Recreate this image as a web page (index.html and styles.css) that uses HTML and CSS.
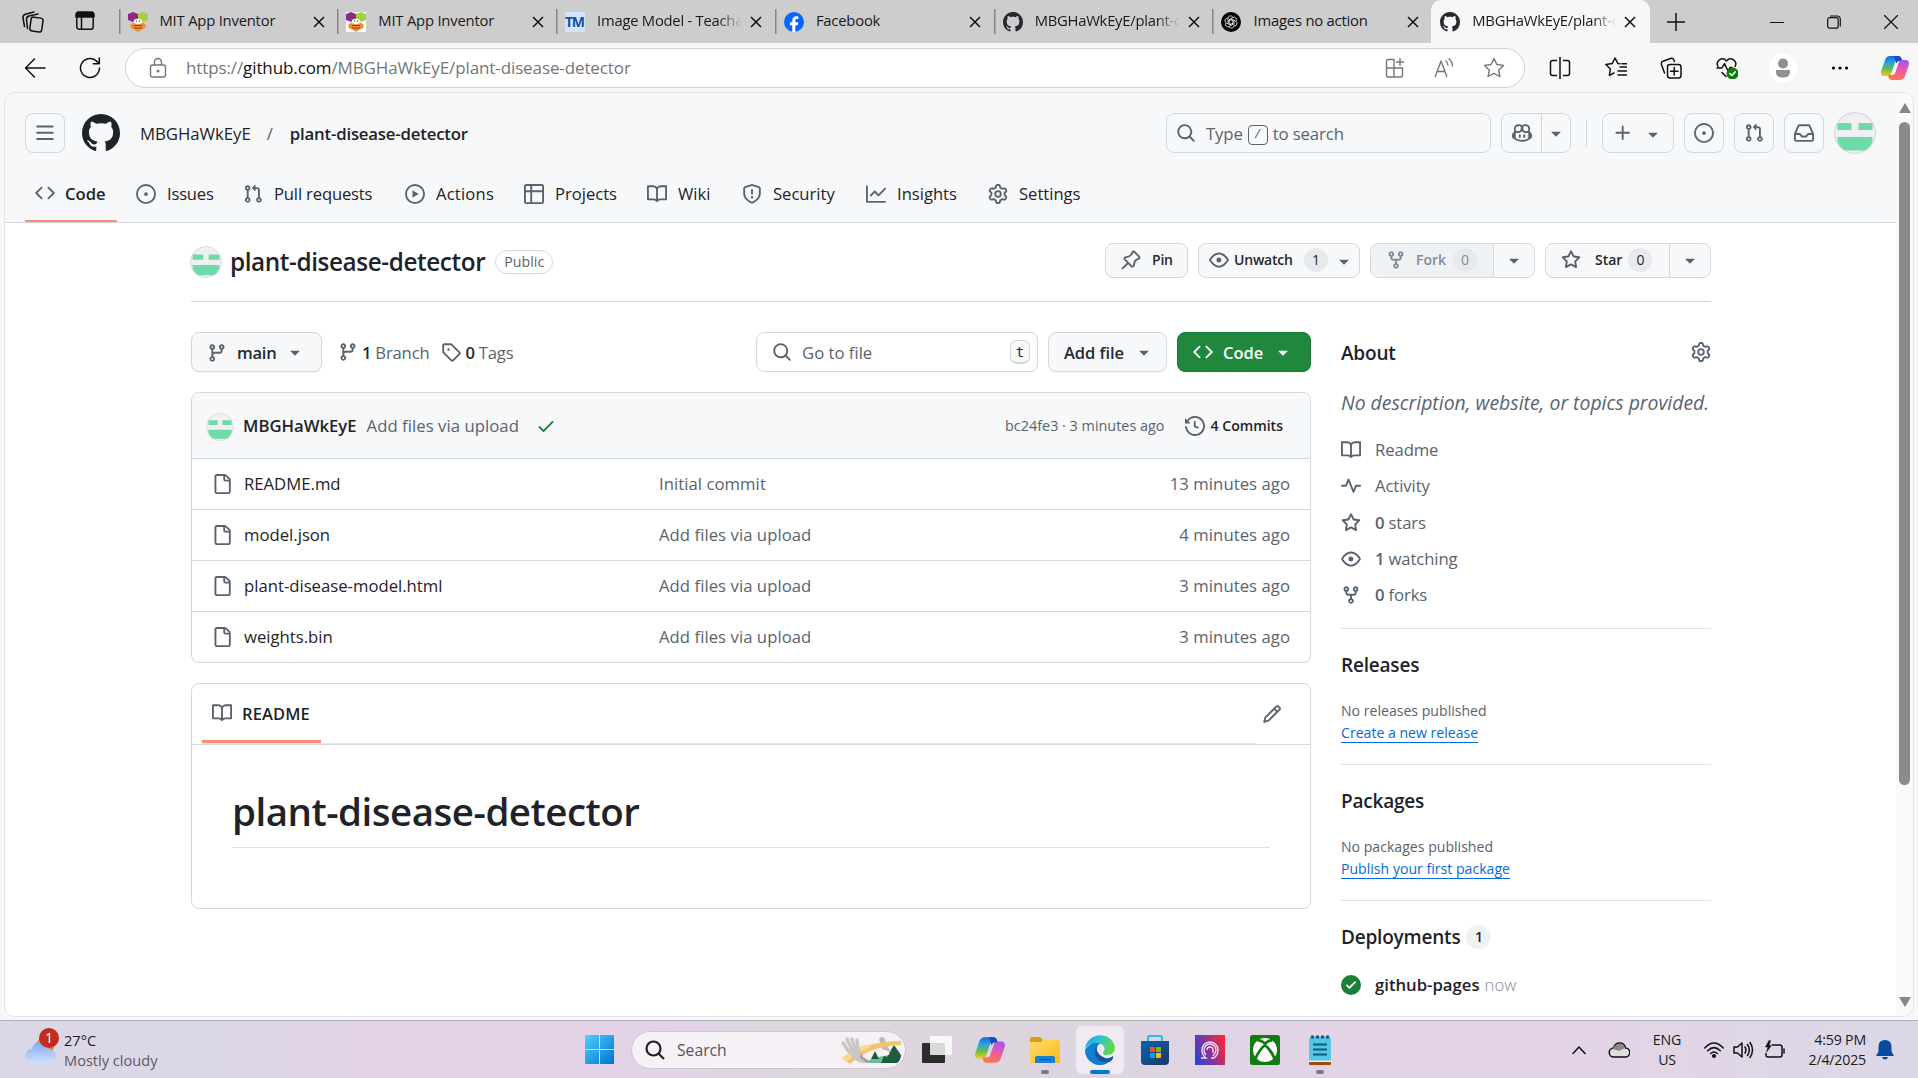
FILE: index.html
```html
<!DOCTYPE html>
<html lang="en">
<head>
<meta charset="utf-8">
<title>MBGHaWkEyE/plant-disease-detector</title>
<link rel="stylesheet" href="styles.css">
</head>
<body>
<svg class="defs" width="0" height="0" aria-hidden="true">
  <symbol id="i-bars" viewBox="0 0 16 16"><path d="M1 2.75A.75.75 0 0 1 1.75 2h12.5a.75.75 0 0 1 0 1.5H1.75A.75.75 0 0 1 1 2.75Zm0 5A.75.75 0 0 1 1.75 7h12.5a.75.75 0 0 1 0 1.5H1.75A.75.75 0 0 1 1 7.75ZM1.75 12h12.5a.75.75 0 0 1 0 1.5H1.75a.75.75 0 0 1 0-1.5Z"/></symbol>
  <symbol id="i-github" viewBox="0 0 16 16"><path d="M8 0c4.42 0 8 3.58 8 8a8.013 8.013 0 0 1-5.45 7.59c-.4.08-.55-.17-.55-.38 0-.27.01-1.13.01-2.2 0-.75-.25-1.23-.54-1.48 1.78-.2 3.65-.88 3.65-3.95 0-.88-.31-1.59-.82-2.15.08-.2.36-1.02-.08-2.12 0 0-.67-.22-2.2.82-.64-.18-1.32-.27-2-.27-.68 0-1.36.09-2 .27-1.53-1.03-2.2-.82-2.2-.82-.44 1.1-.16 1.92-.08 2.12-.51.56-.82 1.28-.82 2.15 0 3.06 1.86 3.75 3.64 3.95-.23.2-.44.55-.51 1.07-.46.21-1.61.55-2.33-.66-.15-.24-.6-.83-1.23-.82-.67.01-.27.38.01.53.34.19.73.9.82 1.13.16.45.68 1.31 2.69.94 0 .67.01 1.3.01 1.49 0 .21-.15.45-.55.38A7.995 7.995 0 0 1 0 8c0-4.42 3.58-8 8-8Z"/></symbol>
  <symbol id="i-code" viewBox="0 0 16 16"><path d="m11.28 3.22 4.25 4.25a.75.75 0 0 1 0 1.06l-4.25 4.25a.749.749 0 0 1-1.275-.326.749.749 0 0 1 .215-.734L13.94 8l-3.72-3.72a.749.749 0 0 1 .326-1.275.749.749 0 0 1 .734.215Zm-6.56 0a.751.751 0 0 1 1.042.018.751.751 0 0 1 .018 1.042L2.06 8l3.72 3.72a.749.749 0 0 1-.326 1.275.749.749 0 0 1-.734-.215L.47 8.53a.75.75 0 0 1 0-1.06Z"/></symbol>
  <symbol id="i-issue" viewBox="0 0 16 16"><path d="M8 9.5a1.5 1.5 0 1 0 0-3 1.5 1.5 0 0 0 0 3Z"/><path d="M8 0a8 8 0 1 1 0 16A8 8 0 0 1 8 0ZM1.5 8a6.5 6.5 0 1 0 13 0 6.5 6.5 0 0 0-13 0Z"/></symbol>
  <symbol id="i-pr" viewBox="0 0 16 16"><path d="M1.5 3.25a2.25 2.25 0 1 1 3 2.122v5.256a2.251 2.251 0 1 1-1.5 0V5.372A2.25 2.25 0 0 1 1.5 3.25Zm5.677-.177L9.573.677A.25.25 0 0 1 10 .854V2.5h1A2.5 2.5 0 0 1 13.5 5v5.628a2.251 2.251 0 1 1-1.5 0V5a1 1 0 0 0-1-1h-1v1.646a.25.25 0 0 1-.427.177L7.177 3.427a.25.25 0 0 1 0-.354ZM3.75 2.5a.75.75 0 1 0 0 1.5.75.75 0 0 0 0-1.5Zm0 9.5a.75.75 0 1 0 0 1.5.75.75 0 0 0 0-1.5Zm8.25.75a.75.75 0 1 0 1.5 0 .75.75 0 0 0-1.5 0Z"/></symbol>
  <symbol id="i-play" viewBox="0 0 16 16"><path d="M8 0a8 8 0 1 1 0 16A8 8 0 0 1 8 0ZM1.5 8a6.5 6.5 0 1 0 13 0 6.5 6.5 0 0 0-13 0Zm4.879-2.773 4.264 2.559a.25.25 0 0 1 0 .428l-4.264 2.559A.25.25 0 0 1 6 10.559V5.442a.25.25 0 0 1 .379-.215Z"/></symbol>
  <symbol id="i-table" viewBox="0 0 16 16"><path d="M0 1.75C0 .784.784 0 1.75 0h12.5C15.216 0 16 .784 16 1.75v12.5A1.75 1.75 0 0 1 14.25 16H1.75A1.75 1.75 0 0 1 0 14.25ZM6.5 6.5v8h7.75a.25.25 0 0 0 .25-.25V6.5Zm8-1.5V1.75a.25.25 0 0 0-.25-.25H6.5V5Zm-13 1.5v7.75c0 .138.112.25.25.25H5v-8ZM5 5V1.5H1.75a.25.25 0 0 0-.25.25V5Z"/></symbol>
  <symbol id="i-book" viewBox="0 0 16 16"><path d="M0 1.75A.75.75 0 0 1 .75 1h4.253c1.227 0 2.317.59 3 1.501A3.743 3.743 0 0 1 11.006 1h4.245a.75.75 0 0 1 .75.75v10.5a.75.75 0 0 1-.75.75h-4.507a2.25 2.25 0 0 0-1.591.659l-.622.621a.75.75 0 0 1-1.06 0l-.622-.621A2.25 2.25 0 0 0 5.258 13H.75a.75.75 0 0 1-.75-.75Zm7.251 10.324.004-5.073-.002-2.253A2.25 2.25 0 0 0 5.003 2.5H1.5v9h3.757a3.75 3.75 0 0 1 1.994.574ZM8.755 4.75l-.004 7.322a3.752 3.752 0 0 1 1.992-.572H14.5v-9h-3.495a2.25 2.25 0 0 0-2.25 2.25Z"/></symbol>
  <symbol id="i-shield" viewBox="0 0 16 16"><path d="M7.467.133a1.748 1.748 0 0 1 1.066 0l5.25 1.68A1.75 1.75 0 0 1 15 3.48V7c0 1.566-.32 3.182-1.303 4.682-.983 1.498-2.585 2.813-5.032 3.855a1.697 1.697 0 0 1-1.33 0c-2.447-1.042-4.049-2.357-5.032-3.855C1.32 10.182 1 8.566 1 7V3.48a1.75 1.75 0 0 1 1.217-1.667Zm.61 1.429a.25.25 0 0 0-.153 0l-5.25 1.68a.25.25 0 0 0-.174.238V7c0 1.358.275 2.666 1.057 3.86.784 1.194 2.121 2.34 4.366 3.297a.196.196 0 0 0 .154 0c2.245-.956 3.582-2.104 4.366-3.298C13.225 9.666 13.5 8.36 13.5 7V3.48a.251.251 0 0 0-.174-.237l-5.25-1.68ZM8.75 4.75v3a.75.75 0 0 1-1.5 0v-3a.75.75 0 0 1 1.5 0ZM9 10.5a1 1 0 1 1-2 0 1 1 0 0 1 2 0Z"/></symbol>
  <symbol id="i-graph" viewBox="0 0 16 16"><path d="M1.5 1.75V13.5h13.75a.75.75 0 0 1 0 1.5H.75a.75.75 0 0 1-.75-.75V1.75a.75.75 0 0 1 1.5 0Zm14.28 2.53-5.25 5.25a.75.75 0 0 1-1.06 0L7 7.06 4.28 9.78a.751.751 0 0 1-1.042-.018.751.751 0 0 1-.018-1.042l3.25-3.25a.75.75 0 0 1 1.06 0L10 7.94l4.72-4.72a.751.751 0 0 1 1.042.018.751.751 0 0 1 .018 1.042Z"/></symbol>
  <symbol id="i-gear" viewBox="0 0 16 16"><path d="M8 0a8.2 8.2 0 0 1 .701.031C9.444.095 9.99.645 10.16 1.29l.288 1.107c.018.066.079.158.212.224.231.114.454.243.668.386.123.082.233.09.299.071l1.103-.303c.644-.176 1.392.021 1.82.63.27.385.506.792.704 1.218.315.675.111 1.422-.364 1.891l-.814.806c-.049.048-.098.147-.088.294.016.257.016.515 0 .772-.01.147.038.246.088.294l.814.806c.475.469.679 1.216.364 1.891a7.977 7.977 0 0 1-.704 1.217c-.428.61-1.176.807-1.82.63l-1.102-.302c-.067-.019-.177-.011-.3.071a5.909 5.909 0 0 1-.668.386c-.133.066-.194.158-.211.224l-.29 1.106c-.168.646-.715 1.196-1.458 1.26a8.006 8.006 0 0 1-1.402 0c-.743-.064-1.289-.614-1.458-1.26l-.289-1.106c-.018-.066-.079-.158-.212-.224a5.738 5.738 0 0 1-.668-.386c-.123-.082-.233-.09-.299-.071l-1.103.303c-.644.176-1.392-.021-1.82-.63a8.12 8.12 0 0 1-.704-1.218c-.315-.675-.111-1.422.363-1.891l.815-.806c.05-.048.098-.147.088-.294a6.214 6.214 0 0 1 0-.772c.01-.147-.038-.246-.088-.294l-.815-.806C.635 6.045.431 5.298.746 4.623a7.92 7.92 0 0 1 .704-1.217c.428-.61 1.176-.807 1.82-.63l1.102.302c.067.019.177.011.3-.071.214-.143.437-.272.668-.386.133-.066.194-.158.211-.224l.29-1.106C6.009.645 6.556.095 7.299.03 7.53.01 7.764 0 8 0Zm-.571 1.525c-.036.003-.108.036-.137.146l-.289 1.105c-.147.561-.549.967-.998 1.189-.173.086-.34.183-.5.29-.417.278-.97.423-1.529.27l-1.103-.303c-.109-.03-.175.016-.195.045-.22.312-.412.644-.573.99-.014.031-.021.11.059.19l.815.806c.411.406.562.957.53 1.456a4.709 4.709 0 0 0 0 .582c.032.499-.119 1.05-.53 1.456l-.815.806c-.081.08-.073.159-.059.19.162.346.353.677.573.989.02.03.085.076.195.046l1.102-.303c.56-.153 1.113-.008 1.53.27.161.107.328.204.501.29.447.222.85.629.997 1.189l.289 1.105c.029.109.101.143.137.146a6.6 6.6 0 0 0 1.142 0c.036-.003.108-.036.137-.146l.289-1.105c.147-.561.549-.967.998-1.189.173-.086.34-.183.5-.29.417-.278.97-.423 1.529-.27l1.103.303c.109.029.175-.016.195-.045.22-.313.411-.644.573-.99.014-.031.021-.11-.059-.19l-.815-.806c-.411-.406-.562-.957-.53-1.456a4.709 4.709 0 0 0 0-.582c-.032-.499.119-1.05.53-1.456l.815-.806c.081-.08.073-.159.059-.19a6.464 6.464 0 0 0-.573-.989c-.02-.03-.085-.076-.195-.046l-1.102.303c-.56.153-1.113.008-1.53-.27a4.44 4.44 0 0 0-.501-.29c-.447-.222-.85-.629-.997-1.189l-.289-1.105c-.029-.11-.101-.143-.137-.146a6.6 6.6 0 0 0-1.142 0ZM11 8a3 3 0 1 1-6 0 3 3 0 0 1 6 0ZM9.5 8a1.5 1.5 0 1 0-3.001.001A1.5 1.5 0 0 0 9.5 8Z"/></symbol>
  <symbol id="i-search" viewBox="0 0 16 16"><path d="M10.68 11.74a6 6 0 0 1-7.922-8.982 6 6 0 0 1 8.982 7.922l3.04 3.04a.749.749 0 0 1-.326 1.275.749.749 0 0 1-.734-.215ZM11.5 7a4.499 4.499 0 1 0-8.997 0A4.499 4.499 0 0 0 11.5 7Z"/></symbol>
  <symbol id="i-copilot" viewBox="0 0 16 16"><path d="M7.998 15.035c-4.562 0-7.873-2.914-7.998-3.749V9.338c.085-.628.677-1.686 1.588-2.065.013-.07.024-.143.036-.218.029-.183.06-.384.126-.612-.201-.508-.254-1.084-.254-1.656 0-.87.128-1.769.693-2.484.579-.733 1.494-1.124 2.724-1.261 1.206-.134 2.262.034 2.944.765.05.053.096.108.139.165.044-.057.094-.112.143-.165.682-.731 1.738-.899 2.944-.765 1.23.137 2.145.528 2.724 1.261.566.715.693 1.614.693 2.484 0 .572-.053 1.148-.254 1.656.066.228.098.429.126.612.012.076.024.148.037.218.924.385 1.522 1.471 1.591 2.095v1.872c0 .766-3.351 3.795-8.002 3.795Zm0-1.485c2.28 0 4.584-1.11 5.002-1.433V7.862l-.023-.116c-.49.21-1.075.291-1.727.291-1.146 0-2.059-.327-2.71-.991A3.222 3.222 0 0 1 8 6.303a3.24 3.24 0 0 1-.544.743c-.65.664-1.563.991-2.71.991-.652 0-1.236-.081-1.727-.291l-.023.116v4.255c.419.323 2.722 1.433 5.002 1.433ZM6.762 2.83c-.193-.206-.637-.413-1.682-.297-1.019.113-1.479.404-1.713.7-.247.312-.369.789-.369 1.554 0 .793.129 1.171.308 1.371.162.181.519.379 1.442.379.853 0 1.339-.235 1.638-.54.315-.322.527-.827.617-1.553.117-.935-.037-1.395-.241-1.614Zm4.155-.297c-1.044-.116-1.488.091-1.681.297-.204.219-.359.679-.242 1.614.091.726.303 1.231.618 1.553.299.305.784.54 1.638.54.922 0 1.28-.198 1.442-.379.179-.2.308-.578.308-1.371 0-.765-.123-1.242-.37-1.554-.233-.296-.693-.587-1.713-.7Z"/><path d="M6.25 9.037a.75.75 0 0 1 .75.75v1.501a.75.75 0 0 1-1.5 0V9.787a.75.75 0 0 1 .75-.75Zm4.25.75v1.501a.75.75 0 0 1-1.5 0V9.787a.75.75 0 0 1 1.5 0Z"/></symbol>
  <symbol id="i-caret" viewBox="0 0 16 16"><path d="m4.427 7.427 3.396 3.396a.25.25 0 0 0 .354 0l3.396-3.396A.25.25 0 0 0 11.396 7H4.604a.25.25 0 0 0-.177.427Z"/></symbol>
  <symbol id="i-plus" viewBox="0 0 16 16"><path d="M7.75 2a.75.75 0 0 1 .75.75V7h4.25a.75.75 0 0 1 0 1.5H8.5v4.25a.75.75 0 0 1-1.5 0V8.5H2.75a.75.75 0 0 1 0-1.5H7V2.75A.75.75 0 0 1 7.75 2Z"/></symbol>
  <symbol id="i-inbox" viewBox="0 0 16 16"><path d="M2.8 2.06A1.75 1.75 0 0 1 4.41 1h7.18c.7 0 1.333.417 1.61 1.06l2.74 6.395c.04.093.06.194.06.295v4.5A1.75 1.75 0 0 1 14.25 15H1.75A1.75 1.75 0 0 1 0 13.25v-4.5c0-.101.02-.202.06-.295Zm1.61.44a.25.25 0 0 0-.23.152L1.887 8H4.75a.75.75 0 0 1 .6.3L6.625 10h2.75l1.275-1.7a.75.75 0 0 1 .6-.3h2.863L11.82 2.652a.25.25 0 0 0-.23-.152Zm10.09 7h-2.875l-1.275 1.7a.75.75 0 0 1-.6.3h-3.5a.75.75 0 0 1-.6-.3L4.375 9.5H1.5v3.75c0 .138.112.25.25.25h12.5a.25.25 0 0 0 .25-.25Z"/></symbol>
  <symbol id="i-pin" viewBox="0 0 16 16"><path d="m11.294.984 3.722 3.722a1.75 1.75 0 0 1-.504 2.826l-1.327.613a3.089 3.089 0 0 0-1.707 2.084l-.584 2.454c-.317 1.332-1.972 1.8-2.94.832L5.75 11.311 1.78 15.28a.749.749 0 1 1-1.06-1.06l3.969-3.97-2.204-2.204c-.968-.968-.5-2.623.832-2.94l2.454-.584a3.08 3.08 0 0 0 2.084-1.707l.613-1.327a1.75 1.75 0 0 1 2.826-.504ZM6.283 9.723l2.732 2.731a.25.25 0 0 0 .42-.119l.584-2.454a4.586 4.586 0 0 1 2.537-3.098l1.328-.613a.25.25 0 0 0 .072-.404l-3.722-3.722a.25.25 0 0 0-.404.072l-.613 1.328a4.584 4.584 0 0 1-3.098 2.537l-2.454.584a.25.25 0 0 0-.119.42l2.731 2.732Z"/></symbol>
  <symbol id="i-eye" viewBox="0 0 16 16"><path d="M8 2c1.981 0 3.671.992 4.933 2.078 1.27 1.091 2.187 2.345 2.637 3.023a1.62 1.62 0 0 1 0 1.798c-.45.678-1.367 1.932-2.637 3.023C11.67 13.008 9.981 14 8 14c-1.981 0-3.671-.992-4.933-2.078C1.797 10.83.88 9.576.43 8.898a1.62 1.62 0 0 1 0-1.798c.45-.677 1.367-1.931 2.637-3.022C4.33 2.992 6.019 2 8 2ZM1.679 7.932a.12.12 0 0 0 0 .136c.411.622 1.241 1.75 2.366 2.717C5.176 11.758 6.527 12.5 8 12.5c1.473 0 2.825-.742 3.955-1.715 1.124-.967 1.954-2.096 2.366-2.717a.12.12 0 0 0 0-.136c-.412-.621-1.242-1.75-2.366-2.717C10.824 4.242 9.473 3.5 8 3.5c-1.473 0-2.825.742-3.955 1.715-1.124.967-1.954 2.096-2.366 2.717ZM8 10a2 2 0 1 1-.001-3.999A2 2 0 0 1 8 10Z"/></symbol>
  <symbol id="i-fork" viewBox="0 0 16 16"><path d="M5 5.372v.878c0 .414.336.75.75.75h4.5a.75.75 0 0 0 .75-.75v-.878a2.25 2.25 0 1 1 1.5 0v.878a2.25 2.25 0 0 1-2.25 2.25h-1.5v2.128a2.251 2.251 0 1 1-1.5 0V8.5h-1.5A2.25 2.25 0 0 1 3.5 6.25v-.878a2.25 2.25 0 1 1 1.5 0ZM5 3.25a.75.75 0 1 0-1.5 0 .75.75 0 0 0 1.5 0Zm6.75.75a.75.75 0 1 0 0-1.5.75.75 0 0 0 0 1.5Zm-3 8.75a.75.75 0 1 0-1.5 0 .75.75 0 0 0 1.5 0Z"/></symbol>
  <symbol id="i-star" viewBox="0 0 16 16"><path d="M8 .25a.75.75 0 0 1 .673.418l1.882 3.815 4.21.612a.75.75 0 0 1 .416 1.279l-3.046 2.97.719 4.192a.751.751 0 0 1-1.088.791L8 12.347l-3.766 1.98a.75.75 0 0 1-1.088-.79l.72-4.194L.818 6.374a.75.75 0 0 1 .416-1.28l4.21-.611L7.327.668A.75.75 0 0 1 8 .25Zm0 2.445L6.615 5.5a.75.75 0 0 1-.564.41l-3.097.45 2.24 2.184a.75.75 0 0 1 .216.664l-.528 3.084 2.769-1.456a.75.75 0 0 1 .698 0l2.77 1.456-.53-3.084a.75.75 0 0 1 .216-.664l2.24-2.183-3.096-.45a.75.75 0 0 1-.564-.41L8 2.694Z"/></symbol>
  <symbol id="i-branch" viewBox="0 0 16 16"><path d="M9.5 3.25a2.25 2.25 0 1 1 3 2.122V6A2.5 2.5 0 0 1 10 8.5H6a1 1 0 0 0-1 1v1.128a2.251 2.251 0 1 1-1.5 0V5.372a2.25 2.25 0 1 1 1.5 0v1.836A2.493 2.493 0 0 1 6 7h4a1 1 0 0 0 1-1v-.628A2.25 2.25 0 0 1 9.5 3.25Zm-6 0a.75.75 0 1 0 1.5 0 .75.75 0 0 0-1.5 0Zm8.25-.75a.75.75 0 1 0 0 1.5.75.75 0 0 0 0-1.5ZM4.25 12a.75.75 0 1 0 0 1.5.75.75 0 0 0 0-1.5Z"/></symbol>
  <symbol id="i-tag" viewBox="0 0 16 16"><path d="M1 7.775V2.75C1 1.784 1.784 1 2.75 1h5.025c.464 0 .91.184 1.238.513l6.25 6.25a1.75 1.75 0 0 1 0 2.474l-5.026 5.026a1.75 1.75 0 0 1-2.474 0l-6.25-6.25A1.752 1.752 0 0 1 1 7.775Zm1.5 0c0 .066.026.13.073.177l6.25 6.25a.25.25 0 0 0 .354 0l5.025-5.025a.25.25 0 0 0 0-.354l-6.25-6.25a.25.25 0 0 0-.177-.073H2.75a.25.25 0 0 0-.25.25ZM6 5a1 1 0 1 1 0 2 1 1 0 0 1 0-2Z"/></symbol>
  <symbol id="i-check" viewBox="0 0 16 16"><path d="M13.78 4.22a.75.75 0 0 1 0 1.06l-7.25 7.25a.75.75 0 0 1-1.06 0L2.22 9.28a.751.751 0 0 1 .018-1.042.751.751 0 0 1 1.042-.018L6 10.94l6.72-6.72a.75.75 0 0 1 1.06 0Z"/></symbol>
  <symbol id="i-history" viewBox="0 0 16 16"><path d="m.427 1.927 1.215 1.215a8.002 8.002 0 1 1-1.6 5.685.75.75 0 1 1 1.493-.154 6.5 6.5 0 1 0 1.18-4.458l1.358 1.358A.25.25 0 0 1 3.896 6H.25A.25.25 0 0 1 0 5.75V2.104a.25.25 0 0 1 .427-.177ZM7.75 4a.75.75 0 0 1 .75.75v2.992l2.028.812a.75.75 0 0 1-.557 1.392l-2.5-1A.751.751 0 0 1 7 8.25v-3.5A.75.75 0 0 1 7.75 4Z"/></symbol>
  <symbol id="i-file" viewBox="0 0 16 16"><path d="M2 1.75C2 .784 2.784 0 3.75 0h6.586c.464 0 .909.184 1.237.513l2.914 2.914c.329.328.513.773.513 1.237v9.586A1.75 1.75 0 0 1 13.25 16h-9.5A1.75 1.75 0 0 1 2 14.25Zm1.75-.25a.25.25 0 0 0-.25.25v12.5c0 .138.112.25.25.25h9.5a.25.25 0 0 0 .25-.25V6h-2.75A1.75 1.75 0 0 1 9 4.25V1.5Zm6.75.062V4.25c0 .138.112.25.25.25h2.688l-.011-.013-2.914-2.914-.013-.011Z"/></symbol>
  <symbol id="i-pencil" viewBox="0 0 16 16"><path d="M11.013 1.427a1.75 1.75 0 0 1 2.474 0l1.086 1.086a1.75 1.75 0 0 1 0 2.474l-8.61 8.61c-.21.21-.47.364-.756.445l-3.251.93a.75.75 0 0 1-.927-.928l.929-3.25c.081-.286.235-.547.445-.758l8.61-8.61Zm.176 4.823L9.75 4.81l-6.286 6.287a.253.253 0 0 0-.064.108l-.558 1.953 1.953-.558a.253.253 0 0 0 .108-.064Zm1.238-3.763a.25.25 0 0 0-.354 0L10.811 3.75l1.439 1.44 1.263-1.263a.25.25 0 0 0 0-.354Z"/></symbol>
  <symbol id="i-pulse" viewBox="0 0 16 16"><path d="M6 2c.306 0 .582.187.696.471L10 10.731l1.304-3.26A.751.751 0 0 1 12 7h3.25a.75.75 0 0 1 0 1.5h-2.742l-1.812 4.528a.751.751 0 0 1-1.392 0L6 4.77 4.696 8.03A.75.75 0 0 1 4 8.5H.75a.75.75 0 0 1 0-1.5h2.742l1.812-4.529A.751.751 0 0 1 6 2Z"/></symbol>
  <symbol id="i-checkfill" viewBox="0 0 16 16"><path d="M8 16A8 8 0 1 1 8 0a8 8 0 0 1 0 16Zm3.78-9.72a.751.751 0 0 0-.018-1.042.751.751 0 0 0-1.042-.018L6.75 9.19 5.28 7.72a.751.751 0 0 0-1.042.018.751.751 0 0 0-.018 1.042l2 2a.75.75 0 0 0 1.06 0Z"/></symbol>
  <symbol id="i-x" viewBox="0 0 12 12"><path d="M1 1l10 10M11 1L1 11" fill="none" stroke="#111" stroke-width="1.5"/></symbol>
  <symbol id="i-avatar" viewBox="0 0 40 40"><circle cx="20" cy="20" r="19.5" fill="#f0f0f0"/><path d="M3.3 10.5h13.3v6.6H3.3zM23.4 10.5h13.3v6.6H23.4zM3.3 23.8h33.4v4.5Q34 34 31 36.700H9Q6 34 3.300 28.300z" fill="#6edaa8"/><circle cx="20" cy="20" r="19.400" fill="none" stroke="#d4d8dc" stroke-width="1.100"/></symbol>
  <symbol id="i-bee" viewBox="0 0 20 20"><path d="M5 0l5 2v6L5 10 0 8V2z" fill="#8e2a86"/><path d="M15 0l5 2v6l-5 2-5-2V2z" fill="#a5cf3f"/><path d="M3 12l4-2h6l4 2 1 2-2 3H4l-2-3z" fill="#f18b34"/><path d="M5.500 11h9v6L10 20l-4.500-3z" fill="#f18b34"/><ellipse cx="10" cy="9.500" rx="4.300" ry="2.800" fill="#fff"/><circle cx="8.500" cy="9" r=".7" fill="#444"/><circle cx="11.500" cy="9" r=".7" fill="#444"/><path d="M6 13.500h8M6 16h8" stroke="#7a4a2d" stroke-width="1.200"/></symbol>
  <symbol id="i-cop" viewBox="0 0 28 28"><path d="M9 2h8c2 0 3 1 3.500 3l.5 2h-4c-2 0-3 1-3.500 3l-3 9c-.5 2-1.500 3-3.500 3H3C0 22-.5 19 .5 16L4 6c.8-2.500 2.500-4 5-4z" fill="url(#cg1)"/><path d="M19 26h-8c-2 0-3-1-3.500-3L7 21h4c2 0 3-1 3.500-3l3-9c.5-2 1.500-3 3.500-3h4c3 0 3.500 3 2.500 6l-3.500 10c-.8 2.500-2.500 4-5 4z" fill="url(#cg2)"/><path d="M13 2h4c2 0 3 1 3.500 3l.5 1.500c-3 0-4.500.5-5.500 3z" fill="#1749c8"/></symbol>
  <linearGradient id="cg1" x1="0" y1="0" x2="0" y2="1"><stop offset="0" stop-color="#1668dc"/><stop offset=".35" stop-color="#25a8d8"/><stop offset=".65" stop-color="#63bd55"/><stop offset="1" stop-color="#fdc810"/></linearGradient>
  <linearGradient id="cg2" x1=".6" y1="0" x2=".3" y2="1"><stop offset="0" stop-color="#a855f2"/><stop offset=".5" stop-color="#f05a9c"/><stop offset="1" stop-color="#fb7a48"/></linearGradient>
  <linearGradient id="win" x1="0" y1="0" x2="1" y2="1"><stop offset="0" stop-color="#4fd2fc"/><stop offset="1" stop-color="#0070d2"/></linearGradient>
  <linearGradient id="cloud" x1="0" y1="0" x2="0" y2="1"><stop offset="0" stop-color="#7fa9f2"/><stop offset="1" stop-color="#cfe0fb"/></linearGradient>
  <linearGradient id="folder" x1="0" y1="0" x2="1" y2="1"><stop offset="0" stop-color="#ffd970"/><stop offset="1" stop-color="#fbbb13"/></linearGradient>
  <linearGradient id="edgetop" x1="0" y1="0" x2="1" y2=".3"><stop offset="0" stop-color="#1d9de0"/><stop offset=".5" stop-color="#2fc2d5"/><stop offset="1" stop-color="#61d84a"/></linearGradient>
  <linearGradient id="store" x1="0" y1="0" x2="1" y2="1"><stop offset="0" stop-color="#0565b5"/><stop offset="1" stop-color="#22355f"/></linearGradient>
  <linearGradient id="knot" x1="0" y1=".7" x2="1" y2=".3"><stop offset="0" stop-color="#3340d8"/><stop offset=".5" stop-color="#8c3494"/><stop offset="1" stop-color="#f92738"/></linearGradient>
</svg>

<header class="tabstrip">
  <div class="strip-icons">
    <svg width="24" height="24" viewBox="0 0 24 24" class="line"><rect x="9.500" y="7.500" width="12" height="14" rx="2.500" transform="rotate(8 15 14)"/><path d="M6.500 18.500L5.500 9.500Q5.500 6.500 8 6L17 4M3.500 16.500L2 8Q1.800 5 4.500 4.300L13 2"/></svg>
    <svg width="20" height="20" viewBox="0 0 20 20" class="line"><rect x="1.800" y="1.800" width="16.400" height="16.400" rx="2.500"/><path d="M1 6V3.500A2.500 2.500 0 0 1 3.500 1h13A2.500 2.500 0 0 1 19 3.500V6z" fill="#111"/><path d="M6.500 6v12"/></svg>
  </div>
  <div class="tab"><svg class="fav"><use href="#i-bee"/></svg><span class="tab-title">MIT App Inventor</span><svg class="x"><use href="#i-x"/></svg></div>
  <div class="tab"><svg class="fav white"><use href="#i-bee"/></svg><span class="tab-title">MIT App Inventor</span><svg class="x"><use href="#i-x"/></svg></div>
  <div class="tab"><span class="fav tm">TM</span><span class="tab-title fade">Image Model - Teacha</span><svg class="x"><use href="#i-x"/></svg></div>
  <div class="tab"><svg class="fav" viewBox="0 0 20 20"><circle cx="10" cy="10" r="10" fill="#0866ff"/><path d="M8.300 20v-6.700H6v-3h2.300V8.700c0-3 1.500-4.500 4.300-4.500.6 0 1.300.1 1.700.2V7H13c-1.300 0-1.700.6-1.700 1.700v1.600h2.900l-.5 3h-2.400V20z" fill="#fff"/></svg><span class="tab-title">Facebook</span><svg class="x"><use href="#i-x"/></svg></div>
  <div class="tab"><svg class="fav dark"><use href="#i-github"/></svg><span class="tab-title fade">MBGHaWkEyE/plant-d</span><svg class="x"><use href="#i-x"/></svg></div>
  <div class="tab"><svg class="fav" viewBox="0 0 20 20"><circle cx="10" cy="10" r="10" fill="#000"/><g fill="none" stroke="#fff" stroke-width=".8"><path id="petal" d="M10 12.300L7 10.500V6.200a2.500 2.500 0 0 1 4.700-1.100"/><use href="#petal" transform="rotate(60 10 10)"/><use href="#petal" transform="rotate(120 10 10)"/><use href="#petal" transform="rotate(180 10 10)"/><use href="#petal" transform="rotate(240 10 10)"/><use href="#petal" transform="rotate(300 10 10)"/></g></svg><span class="tab-title">Images no action</span><svg class="x"><use href="#i-x"/></svg></div>
  <div class="tab active"><svg class="fav dark"><use href="#i-github"/></svg><span class="tab-title fade">MBGHaWkEyE/plant-d</span><svg class="x"><use href="#i-x"/></svg></div>
  <svg class="newtab line" width="18" height="18" viewBox="0 0 18 18"><path d="M9 0v18M0 9h18"/></svg>
  <div class="winctl">
    <svg width="14" height="14" viewBox="0 0 14 14" class="line thin"><path d="M.5 7.500h13"/></svg>
    <svg width="14" height="14" viewBox="0 0 14 14" class="line thin"><rect x=".7" y="2.700" width="10.500" height="10.500" rx="2"/><path d="M3.500 1h6.500q3.300 0 3.300 3.300V11"/></svg>
    <svg width="14" height="14" viewBox="0 0 14 14" class="line thin"><path d="M.5.5l13 13M13.500.5l-13 13"/></svg>
  </div>
</header>

<div class="toolbar">
  <svg class="back line" width="22" height="22" viewBox="0 0 22 22"><path d="M21 11H2M10.500 2L1.500 11l9 9"/></svg>
  <svg class="reload line" width="22" height="22" viewBox="0 0 22 22"><path d="M20.500 11A9.500 9.500 0 1 1 17 3.600L20 6.500M20.300 1v5.700h-6"/></svg>
  <div class="address">
    <svg class="lock" width="18" height="22" viewBox="0 0 18 22"><rect x="1.500" y="8" width="15" height="12" rx="2"/><path d="M5.500 8V5a3.500 3.500 0 0 1 7 0v3"/><circle cx="9" cy="14" r=".8"/></svg>
    <span class="url">https://<b>github.com</b>/MBGHaWkEyE/plant-disease-detector</span>
    <span class="addr-icons">
      <svg width="20" height="20" viewBox="0 0 20 20"><path d="M9 10H1.500V3q0-1.500 1.500-1.500h6zM1.500 10v7.500q0 1.500 1.500 1.500h6v-9zM9 10h8.500v7.500q0 1.500-1.500 1.500H9zM15 0v8M11 4h8"/></svg>
      <svg width="20" height="20" viewBox="0 0 20 20"><path d="M1 19L7 3l6 16M3.200 13.500h7.600M11.500 2.500q2.500 2 2.500 5M14.500.5q4 3 4 8"/></svg>
      <svg width="22" height="22" viewBox="0 0 22 22"><path d="M11 1.500l2.900 6 6.600.9-4.800 4.600 1.200 6.500-5.900-3.100-5.900 3.100 1.200-6.500L1.500 8.400l6.600-.9z"/></svg>
    </span>
  </div>
  <div class="tool-icons">
    <svg class="line" viewBox="0 0 22 22"><path d="M11 0v22M7.500 3.500h-4a2 2 0 0 0-2 2v11a2 2 0 0 0 2 2h4M14.500 3.500h4a2 2 0 0 1 2 2v11a2 2 0 0 1-2 2h-4"/></svg>
    <svg class="line" viewBox="0 0 22 22"><path d="M15 6.700l-2.200-.3L10 1 7.200 6.600l-6.400.9 4.600 4.500-1 6.400 4.600-2.400M15 10h6.500M13 14h8.500M13 18h8.500M17 6.800h4.500"/></svg>
    <svg class="line" viewBox="0 0 22 22"><rect x="7.500" y="7.500" width="13.500" height="13.500" rx="2.500"/><path d="M14.200 10.500v7.500M10.500 14.200H18M4.500 16L1.500 7.500q-.6-2.500 1.500-3.200L10.500 1.500q2.500-.8 3.300 1.500l.5 1.500"/></svg>
    <svg class="line" viewBox="0 0 22 22"><path d="M10 19.500L6 15.500M2 9.500C-1 4 6-1 10.500 4 15-1 22 4 19 9.500M1 11h5l2.500-4.500L12 14l2-3.500h2"/><circle cx="16.500" cy="16.500" r="6" fill="#107c10" stroke="none"/><path d="M13.800 16.500l2 2 3.500-3.800" stroke="#fff"/></svg>
    <svg class="profile user" viewBox="0 0 28 28"><circle cx="14" cy="14" r="14" fill="#fff"/><circle cx="14" cy="9.500" r="5" fill="#8f8f8f"/><path d="M7 16h14v2q0 5.500-7 5.500T7 18z" fill="#8f8f8f"/></svg>
    <svg viewBox="0 0 22 22"><circle cx="4.500" cy="11" r="1.600"/><circle cx="11" cy="11" r="1.600"/><circle cx="17.500" cy="11" r="1.600"/></svg>
    <svg class="profile" viewBox="0 0 28 28"><use href="#i-cop"/></svg>
  </div>
</div>

<div class="viewport">
<main class="page">
  <div class="gh-header">
    <div class="gh-top">
      <span class="sq"><svg class="oct"><use href="#i-bars"/></svg></span>
      <svg class="gh-logo"><use href="#i-github"/></svg>
      <nav class="crumbs"><span class="owner">MBGHaWkEyE</span><span class="slash">/</span><b>plant-disease-detector</b></nav>
      <div class="gh-search"><svg class="oct"><use href="#i-search"/></svg><span class="type">Type</span><kbd>/</kbd><span>to search</span></div>
      <div class="split"><span class="cop"><svg class="oct"><use href="#i-copilot"/></svg></span><span class="drop"><svg class="oct"><use href="#i-caret"/></svg></span></div>
      <i class="vr"></i>
      <div class="sq create"><svg class="oct"><use href="#i-plus"/></svg><svg class="oct"><use href="#i-caret"/></svg></div>
      <span class="sq"><svg class="oct"><use href="#i-issue"/></svg></span>
      <span class="sq"><svg class="oct"><use href="#i-pr"/></svg></span>
      <span class="sq"><svg class="oct"><use href="#i-inbox"/></svg></span>
      <svg class="me"><use href="#i-avatar"/></svg>
    </div>
    <nav class="gh-nav">
      <a class="on"><svg class="oct"><use href="#i-code"/></svg><b>Code</b></a>
      <a><svg class="oct"><use href="#i-issue"/></svg><span>Issues</span></a>
      <a><svg class="oct"><use href="#i-pr"/></svg><span>Pull requests</span></a>
      <a><svg class="oct"><use href="#i-play"/></svg><span>Actions</span></a>
      <a><svg class="oct"><use href="#i-table"/></svg><span>Projects</span></a>
      <a><svg class="oct"><use href="#i-book"/></svg><span>Wiki</span></a>
      <a><svg class="oct"><use href="#i-shield"/></svg><span>Security</span></a>
      <a><svg class="oct"><use href="#i-graph"/></svg><span>Insights</span></a>
      <a><svg class="oct"><use href="#i-gear"/></svg><span>Settings</span></a>
    </nav>
  </div>

  <div class="repo">
    <div class="repo-head">
      <svg class="repo-avatar"><use href="#i-avatar"/></svg>
      <h2>plant-disease-detector</h2>
      <span class="public">Public</span>
      <div class="actions">
        <span class="btn pin"><svg class="oct"><use href="#i-pin"/></svg>Pin</span>
        <span class="btn watch"><svg class="oct"><use href="#i-eye"/></svg>Unwatch<em>1</em><svg class="oct car"><use href="#i-caret"/></svg></span>
        <span class="btn pair fork"><span class="main-part"><svg class="oct"><use href="#i-fork"/></svg>Fork<em>0</em></span><span class="drop"><svg class="oct"><use href="#i-caret"/></svg></span></span>
        <span class="btn pair star"><span class="main-part"><svg class="oct"><use href="#i-star"/></svg>Star<em>0</em></span><span class="drop"><svg class="oct"><use href="#i-caret"/></svg></span></span>
      </div>
    </div>

    <div class="cols">
      <div class="col-main">
        <div class="bar">
          <span class="mbtn branch"><svg class="oct"><use href="#i-branch"/></svg><b>main</b><svg class="oct"><use href="#i-caret"/></svg></span>
          <span class="stat br"><svg class="oct"><use href="#i-branch"/></svg><b>1</b>Branch</span>
          <span class="stat tg"><svg class="oct"><use href="#i-tag"/></svg><b>0</b>Tags</span>
          <span class="goto"><svg class="oct"><use href="#i-search"/></svg><span>Go to file</span><kbd>t</kbd></span>
          <span class="mbtn add"><b>Add file</b><svg class="oct"><use href="#i-caret"/></svg></span>
          <span class="mbtn green"><svg class="oct"><use href="#i-code"/></svg><b>Code</b><svg class="oct"><use href="#i-caret"/></svg></span>
        </div>

        <section class="files">
          <div class="commit">
            <svg class="ava"><use href="#i-avatar"/></svg><b>MBGHaWkEyE</b><span class="msg">Add files via upload</span><svg class="oct ok"><use href="#i-check"/></svg>
            <span class="sha">bc24fe3 · 3 minutes ago</span><svg class="oct"><use href="#i-history"/></svg><span class="count">4 Commits</span>
          </div>
          <div class="row"><svg class="oct"><use href="#i-file"/></svg><span class="name">README.md</span><span class="what">Initial commit</span><span class="when">13 minutes ago</span></div>
          <div class="row"><svg class="oct"><use href="#i-file"/></svg><span class="name">model.json</span><span class="what">Add files via upload</span><span class="when">4 minutes ago</span></div>
          <div class="row"><svg class="oct"><use href="#i-file"/></svg><span class="name">plant-disease-model.html</span><span class="what">Add files via upload</span><span class="when">3 minutes ago</span></div>
          <div class="row"><svg class="oct"><use href="#i-file"/></svg><span class="name">weights.bin</span><span class="what">Add files via upload</span><span class="when">3 minutes ago</span></div>
        </section>

        <section class="readme">
          <div class="readme-head"><div class="rtabs"><span class="rtab"><svg class="oct"><use href="#i-book"/></svg><b>README</b></span></div><svg class="oct"><use href="#i-pencil"/></svg></div>
          <div class="readme-body"><h1>plant-disease-detector</h1></div>
        </section>
      </div>

      <aside>
        <section class="about">
          <h3>About<svg class="oct"><use href="#i-gear"/></svg></h3>
          <p class="desc">No description, website, or topics provided.</p>
          <ul>
            <li><svg class="oct"><use href="#i-book"/></svg>Readme</li>
            <li><svg class="oct"><use href="#i-pulse"/></svg>Activity</li>
            <li><svg class="oct"><use href="#i-star"/></svg><b>0</b> stars</li>
            <li><svg class="oct"><use href="#i-eye"/></svg><b>1</b> watching</li>
            <li><svg class="oct"><use href="#i-fork"/></svg><b>0</b> forks</li>
          </ul>
        </section>
        <section class="block"><h3>Releases</h3><p>No releases published</p><p><a>Create a new release</a></p></section>
        <section class="block"><h3>Packages</h3><p>No packages published</p><p><a>Publish your first package</a></p></section>
        <section class="block"><h3>Deployments<em>1</em></h3><div class="deploy"><svg class="oct"><use href="#i-checkfill"/></svg><b>github-pages</b><span>now</span></div></section>
      </aside>
    </div>
  </div>
</main>
<div class="scroll"><i class="up"></i><i class="thumb"></i><i class="down"></i></div>
</div>

<footer class="taskbar">
  <div class="weather">
    <svg width="36" height="40" viewBox="0 0 36 40"><circle cx="20" cy="19" r="9" fill="#f58220"/><path d="M7 36a7 7 0 0 1 0-14c1-5 4-7 8-7 5 0 8 3 9 7h0a7 7 0 0 1 0 14z" fill="url(#cloud)"/><circle cx="24" cy="11" r="10" fill="#c42b1c"/><text x="24" y="16" text-anchor="middle" fill="#fff" font-size="14">1</text></svg>
    <div class="wtext"><span>27°C</span><span class="cond">Mostly cloudy</span></div>
  </div>
  <div class="apps">
    <svg class="start" width="29" height="29" viewBox="0 0 29 29" fill="url(#win)"><path d="M1 0h13v14H0V1q0-1 1-1zM15 0h13q1 0 1 1v13H15zM0 15h14v14H1q-1 0-1-1zM15 15h14v13q0 1-1 1H15z"/></svg>
    <div class="tsearch"><svg width="20" height="20" viewBox="0 0 20 20" fill="none" stroke="#222" stroke-width="2.200"><circle cx="8.500" cy="8.500" r="7"/><path d="M13.500 13.500l5.500 5.500"/></svg><span>Search</span>
      <svg width="62" height="28" viewBox="0 0 62 28"><path d="M22 27q16-8 38-9-1 5-6 9z" fill="#6fbf94"/><path d="M35 15l-4 8h8zM54 9l-5 8h1l-3 4-3-1-3 7h16q4-3 4-8z" fill="#1f5c3e"/><path d="M39 3q3-4 6 0l1 5 5 8-9-3z" fill="#c2b9b7"/><path d="M2 22Q25 5 61 5v4Q32 9 10 28z" fill="#f0c76d"/><path d="M2 22Q14 12 28 8l2 3Q18 16 6 26z" fill="#f7d996"/><g fill="none" stroke="#cdc5c3" stroke-width="3.400" stroke-linecap="round"><path d="M3 7l6 9M7 3l5 11M12 3l3 10M17 4l1 9"/></g><path d="M8 14q4-3 9-3l4 4 1 6 9 6H21q-10-4-13-13z" fill="#cdc5c3"/><path d="M21 16l2 5 8 5-4 1-7-5z" fill="#a89f9f"/></svg></div>
    <svg class="tview" width="30" height="29" viewBox="0 0 30 29"><rect x="0" y="8" width="23" height="20" rx="1" fill="#2c2c2c"/><rect x="8" y="1" width="22" height="19" rx="1" fill="#fff" opacity=".82"/></svg>
    <span class="app"><svg viewBox="0 0 28 28"><use href="#i-cop"/></svg></span>
    <span class="app run"><svg viewBox="0 0 30 30"><path d="M0 4q0-2 2-2h8l3 3-2 3H0z" fill="#dc9a0c"/><path d="M0 7h11l2-2h15q2 0 2 2v21H0z" fill="url(#folder)"/><path d="M5 28v-5q0-2 2-2h16q2 0 2 2v5z" fill="#1481d4"/><path d="M9 24.500h12" stroke="#074a86"/></svg></span>
    <span class="app cur"><svg viewBox="0 0 30 30"><path d="M0 15A15 15 0 0 0 24 27q5-3 4-6-4 3-8 2-6-2-8-7-1-7 5-8Q7 4 0 15z" fill="#0e7fd2"/><path d="M10 16q0 12 14 11 4-2 4-5.500-4 3-8 1.500-6-2-8-7-1-4 1-6-3 2-3 6z" fill="#13569e"/><path d="M0 14C2-3 26-5 30 12q0 8-8 8-6 0-3-4 2-4-3-7Q6 5 0 14z" fill="url(#edgetop)"/></svg></span>
    <span class="app"><svg viewBox="0 0 30 30"><path d="M8 7V3q0-2 2-2h10q2 0 2 2v4" fill="none" stroke="#30b4ec" stroke-width="2"/><path d="M1 6h28v20q0 4-4 4H5q-4 0-4-4z" fill="url(#store)"/><path fill="#f25022" d="M10 12h5v5h-5z"/><path fill="#7fba00" d="M16 12h5v5h-5z"/><path fill="#00a4ef" d="M10 18h5v5h-5z"/><path fill="#ffb900" d="M16 18h5v5h-5z"/></svg></span>
    <span class="app"><svg viewBox="0 0 30 30"><path fill="url(#knot)" d="M0 0h30v30H0z"/><path d="M6 23h5q-4-3-4-8a8 8 0 0 1 16 0q0 5-4 8h-3M11 20q-2-2-2-5a6 6 0 0 1 12 0q0 3-3 6M12 15a3 3 0 0 1 6 0v3" fill="none" stroke="#f3dcef" stroke-width="1.400"/></svg></span>
    <span class="app"><svg viewBox="0 0 30 30"><rect width="30" height="30" rx="2.500" fill="#107c10"/><circle cx="15" cy="15" r="12" fill="#fff"/><path d="M5 24.500Q9 15 15 10q6 5 10 14.500M7.500 5.500q3.500-.5 7.500 3 4-3.500 7.500-3" fill="none" stroke="#107c10" stroke-width="2.800"/></svg></span>
    <span class="app run"><svg viewBox="0 0 30 30"><rect x="4" y="2" width="22" height="25" rx="2" fill="#55c6e4"/><path d="M4 26h22v3q0 1-1 1H5q-1 0-1-1z" fill="#a14a0a"/><path d="M4 25.500h22v1.500H4z" fill="#eee"/><path d="M8 9.500h14M8 14.500h14M8 19.500h14" stroke="#0b5c80" stroke-width="2"/><g fill="#0b5c80"><circle cx="7.500" cy="2" r="1.800"/><circle cx="12.500" cy="2" r="1.800"/><circle cx="17.500" cy="2" r="1.800"/><circle cx="22.500" cy="2" r="1.800"/></g></svg></span>
  </div>
  <div class="tray">
    <svg class="line chev" width="14" height="10" viewBox="0 0 14 10"><path d="M1 8.500l6-6.500 6 6.500"/></svg>
    <svg class="line cl" width="22" height="18" viewBox="0 0 22 18"><path d="M6 16a4.500 4.500 0 0 1-.5-9C7 3 9 2 11.500 2c3.500 0 5.500 2 6 5a4.500 4.500 0 0 1-.5 9z" fill="#dedede"/><path d="M5 8c2-6 10-8 12-1l-6 3z" fill="#888" stroke="none"/></svg>
    <div class="lang"><span>ENG</span><span>US</span></div>
    <svg class="line" width="20" height="18" viewBox="0 0 20 18"><path d="M.7 7Q10-3 19.300 7M3.700 9.700q6.300-6.200 12.600 0M6.700 12.500q3.300-3 6.600 0"/><circle cx="10" cy="15" r="1.300" fill="#111"/></svg>
    <svg class="line sp" width="21" height="18" viewBox="0 0 21 18"><path d="M1 6h3.500L9 2v14l-4.500-4H1zM12 6q1.800 3 0 6M14.500 3.500q3.500 5.500 0 11M17 1.500q5 7.500 0 15"/></svg>
    <svg class="line" width="21" height="20" viewBox="0 0 21 20"><path d="M8.500 5H16q2 0 2 2v8q0 2-2 2H4q-2 0-2-2v-1.500M20 9v4"/><path d="M5 .5L1.500 7H4l-1.500 5L7.500 5.500H5L6.500 1z" fill="#111" stroke-width=".5"/></svg>
    <div class="clock"><span>4:59 PM</span><span>2/4/2025</span></div>
    <svg class="bell" width="18" height="20" viewBox="0 0 18 20" fill="#0a4a9c"><path d="M9 0q6.500 0 6.500 7v4.500L18 16H0l2.500-4.500V7Q2.500 0 9 0zM6 17h6q-.5 2.500-3 2.500T6 17z"/></svg>
  </div>
</footer>
</body>
</html>
```
FILE: styles.css
```css
* { box-sizing: border-box; }
body {
  margin: 0; width: 1918px; height: 1078px; overflow: hidden;
  display: flex; flex-direction: column;
  background: #f7f7f7; color: #1f2328;
  font: 16.700px/20px "Open Sans", "Noto Sans", sans-serif;
}
b { font-weight: 600; }
em { font-style: normal; }
h1, h2, h3, p, ul { margin: 0; padding: 0; }
svg { display: block; flex: none; }
span, b { white-space: nowrap; }
.defs { position: absolute; }
.line { fill: none; stroke: #111; stroke-width: 1.500; stroke-linejoin: round; stroke-linecap: round; }
.thin { stroke-width: 1.200; }
.oct { width: 20px; height: 20px; fill: #59636e; }

/* tab strip */
.tabstrip { flex: none; height: 43px; background: #cdcdcd; display: flex; align-items: center; }
.strip-icons { width: 118.500px; padding-left: 21px; display: flex; align-items: center; gap: 30px; }
.strip-icons svg:last-child { margin-top: -2px; }
.tab { width: 218.800px; height: 43px; padding: 0 12.500px 0 9px; display: flex; align-items: center; font-size: 14.800px; color: #1a1a1a; background: linear-gradient(#858585, #858585) 0 9px / 1.500px 25px no-repeat; }
.fav { width: 20px; height: 20px; margin-right: 12px; flex: none; }
.white { background: #fff; }
.dark { fill: #24292f; }
.tm { background: #d2e3fc; color: #174ea6; font: 700 14px/20px "Open Sans", sans-serif; letter-spacing: -1.500px; }
.tab-title { flex: 1; min-width: 0; margin-right: 8px; margin-top: -4px; letter-spacing: -.2px; }
.fade { -webkit-mask-image: linear-gradient(90deg, #000 84%, transparent 100%); mask-image: linear-gradient(90deg, #000 84%, transparent 100%); letter-spacing: -.25px; }
.x { width: 12px; height: 12px; }
.active { background: #f7f7f7; border-radius: 10px 10px 0 0; padding-right: 14px; }
.newtab { margin-left: 17px; }
.winctl { margin-left: auto; margin-right: 20px; display: flex; gap: 43px; }

/* toolbar */
.toolbar { flex: none; height: 49px; display: flex; align-items: center; padding-left: 24px; }
.reload { margin-left: 33px; }
.address { margin-left: 24px; width: 1400px; height: 40px; border: 1.500px solid #d0d0d0; border-radius: 20px; background: #fff; display: flex; align-items: center; padding: 0 19px 0 23px; }
.lock, .addr-icons svg { fill: none; stroke: #767676; stroke-width: 1.400; stroke-linejoin: round; }
.url { margin-left: 19px; font-size: 17px; color: #767676; letter-spacing: -.11px; }
.url b { color: #111; font-weight: 400; }
.addr-icons { margin-left: auto; display: flex; align-items: center; gap: 29px; }
.tool-icons { margin-left: 24px; display: flex; align-items: center; gap: 33.500px; }
.tool-icons svg { width: 22px; height: 22px; }
.tool-icons .profile { width: 28px; height: 28px; margin: 0 -3px; }
.tool-icons .user { margin: 0 -2px; }

/* viewport */
.viewport { margin: 0 4px 0 4px; height: 925px; flex: none; border: 1px solid #e2e4e6; border-radius: 11px; background: #fff; display: flex; overflow: hidden; }
.page { width: 1891px; flex: none; }
.scroll { flex: 1; background: #fafafa; display: flex; flex-direction: column; align-items: center; padding: 10px 0 9px; }
.up, .down { border: 6px solid transparent; border-top: 0; border-bottom: 10px solid #868686; }
.thumb { width: 11px; height: 663px; margin-top: 9px; border-radius: 6px; background: #8b8b8b; }
.down { margin-top: auto; transform: rotate(180deg); }

/* repository header */
.gh-header { background: #f6f8fa; border-bottom: 1px solid #d1d9e0; height: 130px; padding: 20px 20px 0 20px; display: flex; flex-direction: column; justify-content: space-between; }
.gh-top { display: flex; align-items: center; height: 40px; }
.sq { width: 40px; height: 40px; border: 1px solid #d1d9e0; border-radius: 8px; display: flex; align-items: center; justify-content: center; }
.gh-logo { width: 38px; height: 38px; margin-left: 17px; margin-right: 1px; fill: #1f2328; }
.crumbs { margin-left: 19px; padding-top: 2px; display: flex; flex: 1; font-size: 16.800px; letter-spacing: -.05px; }
.slash { margin: 0 17px 0 16px; color: #59636e; }
.crumbs b { letter-spacing: -.2px; }
.gh-search { width: 325px; height: 40px; border: 1px solid #d1d9e0; border-radius: 8px; display: flex; align-items: center; padding-left: 9px; color: #59636e; font-size: 16.800px; }
.gh-search span { padding-top: 1px; letter-spacing: -.15px; }
.type { margin: 0 5px 0 10px; }
.gh-search kbd { width: 20px; height: 20px; margin: 3px 5px 0 0; border: 1px solid #59636e; border-radius: 4px; font: 13px/18px "Liberation Mono", monospace; text-align: center; }
.split { margin-left: 10px; width: 70px; height: 40px; border: 1px solid #d1d9e0; border-radius: 8px; display: flex; }
.cop { width: 40px; border-right: 1px solid #d1d9e0; display: flex; align-items: center; justify-content: center; }
.drop { flex: 1; display: flex; align-items: center; justify-content: center; }
.vr { width: 1px; height: 26px; background: #d1d9e0; margin: 0 5px 0 15px; }
.gh-top .vr ~ .sq { margin-left: 10px; }
.create { width: 72px; gap: 10px; }
.create svg:last-child { margin-top: 2px; }
.me { width: 42px; height: 42px; margin-left: 10px; }
.gh-nav { display: flex; gap: 10px; height: 57px; font-size: 16.600px; }
.gh-nav a { display: flex; gap: 11px; padding: 0 10px 0; align-items: center; width: 97px; }
.gh-nav a > :last-child { margin-top: 1px; }
.gh-nav .on { width: 92px; gap: 10px; border-bottom: 2px solid #fd8c73; margin-right: -1px; }
.gh-nav .on b { margin-top: 3px; }
.gh-nav a:nth-child(2) { letter-spacing: -.2px; }
.gh-nav a:nth-child(3) { width: 152px; letter-spacing: -.15px; }
.gh-nav a:nth-child(4) { width: 109px; letter-spacing: .2px; }
.gh-nav a:nth-child(5) { width: 113px; }
.gh-nav a:nth-child(6) { width: 85px; }
.gh-nav a:nth-child(7) { width: 114px; }
.gh-nav a:nth-child(8) { width: 112px; }

/* repository title row */
.repo { padding: 0 185px 0 186px; }
.repo-head { height: 79px; padding-bottom: 1px; border-bottom: 1px solid #d1d9e0; display: flex; align-items: center; }
.repo-avatar { width: 32px; height: 32px; margin-left: -1px; }
h2 { font: 600 24.300px/34px "Open Sans", sans-serif; margin-left: 8px; margin-top: 1px; letter-spacing: -.4px; }
.public { margin-left: 10px; border: 1px solid #d1d9e0; border-radius: 12px; height: 24px; width: 58px; text-align: center; font-size: 14.200px; line-height: 22px; font-weight: 500; color: #59636e; }
.actions { margin-left: auto; margin-top: -3px; display: flex; gap: 10px; }
.btn { height: 35px; border: 1px solid #d1d9e0; border-radius: 8px; background: #f6f8fa; display: flex; align-items: center; font-size: 14px; font-weight: 600; color: #25292e; overflow: hidden; }
.btn em { font-weight: 500; background: #e7eaed; border-radius: 12px; width: 24px; height: 24px; text-align: center; line-height: 24px; }
.pin { width: 83px; padding-left: 15px; gap: 11px; letter-spacing: -.2px; }
.watch { width: 162px; padding-left: 10px; gap: 5px; letter-spacing: -.2px; }
.watch em { margin-left: 6px; }
.watch .car { margin: 1px 0 0 1px; }
.pair { align-items: stretch; }
.main-part { display: flex; align-items: center; border-right: 1px solid #d1d9e0; padding-left: 15px; gap: 10px; }
.main-part em { margin-left: -3px; }
.fork { width: 165px; }
.fork .main-part { width: 123px; background: #eff2f5; color: #818b98; }
.fork .main-part svg { fill: #818b98; }
.star { width: 166px; }
.star .main-part { width: 124px; gap: 14px; }
.star .main-part em { margin-left: -8px; }

/* columns */
.cols { display: flex; gap: 30px; padding-top: 30px; }
.col-main { width: 1120px; }
.bar { display: flex; height: 40px; align-items: center; }
.mbtn { height: 40px; border: 1px solid #d1d9e0; border-radius: 8px; background: #f6f8fa; display: flex; align-items: center; font-size: 16.500px; color: #25292e; box-shadow: 0 1px 0 #1f23280a; }
.mbtn b { margin-top: 1px; }
.branch { width: 131px; padding-left: 15px; gap: 10px; letter-spacing: -.25px; }
.branch svg { margin-top: 1px; }
.branch svg:last-child { margin: 0 0 0 -1px; }
.stat { display: flex; align-items: center; font-size: 16.600px; font-weight: 500; color: #59636e; letter-spacing: -.15px; padding-top: 1px; }
.stat svg { margin-top: -2px; }
.stat b { color: #25292e; margin: 0 4px 0 4px; }
.br { margin-left: 16px; }
.tg { margin-left: 12px; }
.goto { margin-left: auto; width: 282px; height: 40px; border: 1px solid #d1d9e0; border-radius: 8px; display: flex; align-items: center; gap: 10px; padding: 0 7px 0 15px; color: #59636e; }
.goto span { margin-top: 1px; }
.goto kbd { margin-left: auto; width: 20px; height: 24px; border: 1px solid #d1d9e0; border-bottom-width: 2px; border-radius: 7px; background: #f6f8fa; font: 14px/22px "DejaVu Sans Mono", monospace; color: #25292e; text-align: center; }
.add { width: 119px; margin-left: 10px; padding-left: 15px; gap: 10px; letter-spacing: -.05px; }
.green { width: 134px; margin-left: 10px; padding-left: 15px; gap: 10px; background: #1f883d; border-color: #1f7a37; color: #fff; }
.green svg { fill: #fff; }

.files { margin-top: 20px; border: 1px solid #d1d9e0; border-radius: 8px; overflow: hidden; }
.commit { height: 65px; background: #f6f8fa; display: flex; align-items: center; padding: 0 27px 0 14px; }
.ava { width: 28px; height: 28px; margin-top: 2px; }
.commit b { margin-left: 9px; }
.msg { color: #59636e; margin-left: 10px; letter-spacing: .05px; }
.ok { margin-left: 17px; fill: #1a7f37; }
.sha { margin-left: auto; font-size: 14.400px; color: #59636e; margin-right: 21px; }
.count { margin-left: 5px; font-size: 14.100px; font-weight: 600; }
.row { height: 51px; border-top: 1px solid #d1d9e0; display: flex; align-items: center; padding: 0 20px 0 20px; }
.name { width: 415px; margin-left: 12px; }
.what, .when { color: #59636e; letter-spacing: .05px; }
.when { margin-left: auto; }

.readme { margin-top: 20px; height: 226px; border: 1px solid #d1d9e0; border-radius: 8px; }
.readme-head { height: 61px; border-bottom: 1px solid #d1d9e0; display: flex; padding: 0 28px 0 10px; align-items: center; }
.readme-head > svg { margin-left: 6px; }
.rtabs { flex: 1; align-self: stretch; display: flex; border-bottom: 1px solid #e3e8ed; }
.rtab { width: 119px; display: flex; align-items: center; gap: 10px; padding: 2px 10px 0; border-bottom: 3px solid #fd8c73; letter-spacing: .1px; }
.rtab b { font-size: 16.500px; margin-top: 2px; }
.readme-body { padding: 40px; }
h1 { font: 600 38.500px/52px "Open Sans", sans-serif; border-bottom: 1px solid #dce2e8; height: 63px; letter-spacing: -.5px; }

aside { width: 370px; }
h3 { font: 600 19px/24px "Open Sans", sans-serif; display: flex; align-items: center; letter-spacing: -.2px; }
.about { border-bottom: 1px solid #dce2e8; height: 297px; padding-top: 9px; }
.about h3 { justify-content: space-between; }
.about h3 svg { margin-top: -3px; }
.desc { margin-top: 23px; font: italic 19.400px/30px "Open Sans", sans-serif; color: #59636e; white-space: nowrap; }
ul { list-style: none; margin-top: 14px; }
li { height: 36.300px; display: flex; align-items: center; color: #59636e; letter-spacing: -.1px; }
li svg { margin-right: 14px; }
li b { margin-right: 4px; }
.block { height: 136px; padding-top: 24px; border-bottom: 1px solid #dce2e8; }
.block:last-child { border-bottom: 0; }
.block p { font-size: 14.100px; line-height: 22px; color: #59636e; }
.block h3 { margin-bottom: 23px; }
.block a { color: #0969da; border-bottom: 1px solid #0969da; }
.block h3 em { margin-left: 6px; width: 25px; height: 24px; border-radius: 12px; background: #eff1f3; font-size: 14px; text-align: center; }
.deploy { display: flex; align-items: center; padding-top: 3px; }
.deploy svg { fill: #1a7f37; margin-right: 14px; }
.deploy span { color: #818b98; margin-left: 5px; font-weight: 300; }

/* taskbar */
.taskbar { margin-top: auto; flex: none; height: 58px; border-top: 1px solid #b4afb6; background: linear-gradient(90deg, #dcd7e6 0, #dcd7e8 12%, #e2d4e6 18%, #e3d3e7 34%, #dcd6de 42%, #dcd5df 57%, #e2d3e7 68%, #e2d5e6 86%, #dbd8e6 100%); display: grid; grid-template-columns: 585px 1fr auto; font-size: 14.600px; color: #1b1b1b; }
.weather { padding: 6px 0 0 25px; display: flex; gap: 3px; }
.weather svg { font-family: "Open Sans", sans-serif; }
.wtext { display: flex; flex-direction: column; margin-top: 3px; }
.cond { color: #5d5962; }
.apps { display: flex; align-items: center; }
.tsearch { margin-left: 17px; width: 275px; height: 38px; border: 1px solid #cfc4d2; border-radius: 19px; background: #f5f1f7; display: flex; align-items: center; padding: 0 3px 0 13px; color: #555; font-size: 15.700px; overflow: hidden; }
.tsearch span { flex: 1; margin-left: 12px; padding-top: 1px; }
.tview { margin: 0 10px 0 16px; }
.app { width: 48px; height: 48px; margin: 0 3.550px; border-radius: 6px; display: flex; align-items: center; justify-content: center; position: relative; }
.app svg { width: 30px; height: 30px; }
.cur { background: #f0ebf3; }
.run::after, .cur::after { content: ""; position: absolute; bottom: 0; width: 8px; height: 4px; border-radius: 2px; background: #7f7883; }
.cur::after { width: 20px; background: #0078d4; }
.tray { display: flex; align-items: center; padding-right: 24px; }
.lang, .clock { display: flex; flex-direction: column; font-size: 14.200px; letter-spacing: -.2px; }
.lang { text-align: center; width: 60px; margin: 0 7px; }
.cl { margin-left: 22px; }
.sp { margin: 0 10px 0 9px; }
.clock { text-align: right; width: 81px; margin-right: 10px; }
```
